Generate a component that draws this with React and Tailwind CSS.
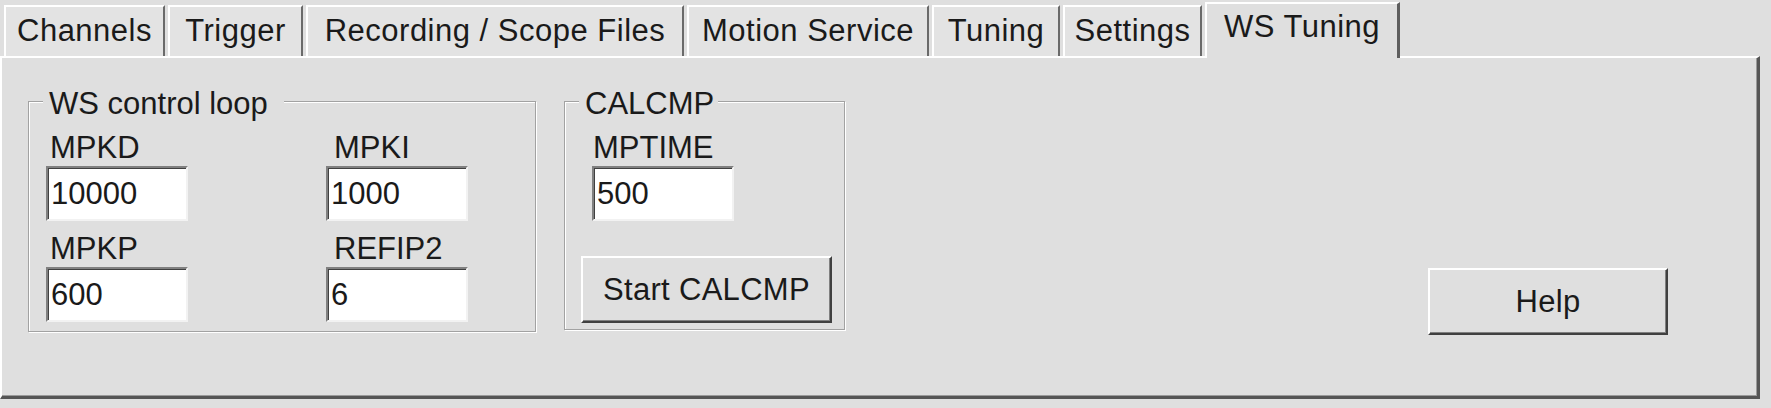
import React from 'react';

const tabs = [
    { name: 'Channels', w: 'w-[161px]' },
    { name: 'Trigger', w: 'w-[135px]' },
    { name: 'Recording / Scope Files', w: 'w-[378px]' },
    { name: 'Motion Service', w: 'w-[242px]' },
    { name: 'Tuning', w: 'w-[128px]' },
    { name: 'Settings', w: 'w-[139px]' },
];

const Field = ({ label, value, labelIndent = 'ml-[4px]', topGap = 'mt-0' }) => (
    <div className={`flex flex-col ${topGap}`}>
        <span className={`h-[31px] ${labelIndent}`}>{label}</span>
        <input
            readOnly
            defaultValue={value}
            className="mt-[3px] w-[142px] h-[55px] bg-white pl-[3px] pr-[4px] text-[31px] text-[#1a1a1a] outline-none border-2 border-t-[#808080] border-l-[#808080] border-r-[#f2f2f2] border-b-[#f2f2f2] shadow-[inset_1px_1px_0_#404040]"
        />
    </div>
);

const Group = ({ title, className, legendPad = 'pr-[4px]', children }) => (
    <div
        className={`relative border border-[#a2a2a2] shadow-[inset_1px_1px_0_#fff,1px_1px_0_#fff] ${className}`}
    >
        <span className={`absolute top-[-14px] left-[14px] bg-[#dfdfdf] pl-[6px] h-[31px] ${legendPad}`}>
            {title}
        </span>
        {children}
    </div>
);

const Button = ({ children, className }) => (
    <button
        className={`flex items-center justify-center bg-[#dfdfdf] text-[31px] text-[#1a1a1a] tracking-[0.3px] border-2 border-t-white border-l-white border-r-[#404040] border-b-[#404040] shadow-[inset_-1px_-1px_0_#808080] ${className}`}
    >
        {children}
    </button>
);

export default function App() {
    return (
        <div className="w-[1771px] h-[408px] bg-[#dfdfdf] text-[#1a1a1a] text-[31px] leading-none font-['Liberation_Sans',Arial,sans-serif] overflow-hidden">
            {/* tab strip */}
            <div className="flex items-end h-[56px] pl-[4px] gap-[3px] tracking-[0.5px]">
                {tabs.map((t) => (
                    <div
                        key={t.name}
                        className={`${t.w} h-[51px] flex justify-center pt-[8px] bg-[#e3e3e3] border-t-2 border-l-2 border-white border-r-2 border-r-[#6a6a6a]`}
                    >
                        {t.name}
                    </div>
                ))}
                <div className="relative z-10 -mb-[2px] w-[195px] h-[56px] flex justify-center pt-[7px] bg-[#dfdfdf] border-t-2 border-l-2 border-white border-r-[3px] border-r-[#5e5e5e]">
                    WS Tuning
                </div>
            </div>

            {/* panel */}
            <div className="w-[1760px] h-[343px] border-t-2 border-l-2 border-white border-r-[3px] border-b-[3px] border-r-[#555] border-b-[#555] shadow-[inset_-1px_-1px_0_#9a9a9a] flex items-start pl-[26px] pt-[43px]">
                <Group
                    title="WS control loop"
                    legendPad="pr-[16px]"
                    className="w-[508px] h-[231px] pt-[30px] pl-[17px]"
                >
                    <div className="flex gap-[138px]">
                        <div className="flex flex-col">
                            <Field label="MPKD" value="10000" />
                            <Field label="MPKP" value="600" topGap="mt-[12px]" />
                        </div>
                        <div className="flex flex-col">
                            <Field label="MPKI" value="1000" labelIndent="ml-[8px]" />
                            <Field label="REFIP2" value="6" labelIndent="ml-[8px]" topGap="mt-[12px]" />
                        </div>
                    </div>
                </Group>

                <Group title="CALCMP" className="ml-[28px] w-[281px] h-[229px] pt-[30px] pl-[16px]">
                    <div className="pl-[11px]">
                        <Field label="MPTIME" value="500" labelIndent="ml-[1px]" />
                    </div>
                    <Button className="mt-[35px] w-[251px] h-[67px]">Start CALCMP</Button>
                </Group>

                <Button className="ml-[583px] mt-[167px] w-[240px] h-[67px]">Help</Button>
            </div>
        </div>
    );
}
